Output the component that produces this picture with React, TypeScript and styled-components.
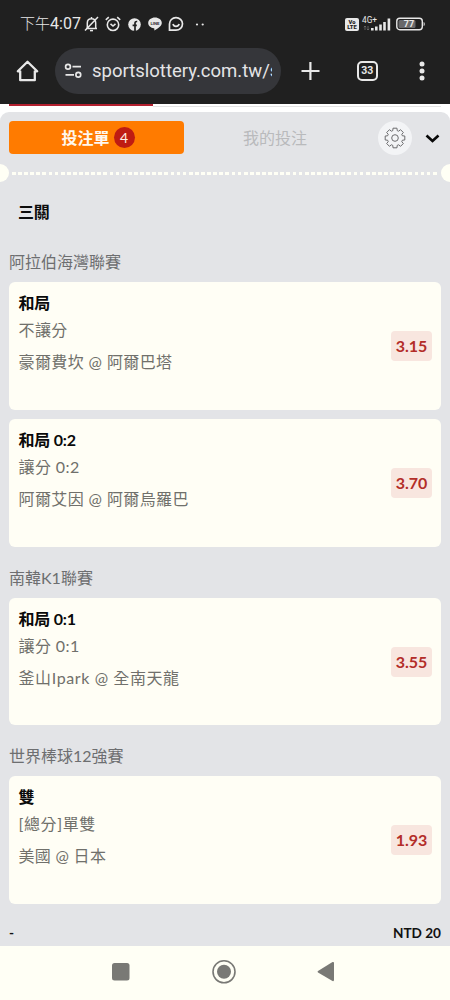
import React from "react";
import styled, { createGlobalStyle } from "styled-components";

const GlobalStyle = createGlobalStyle`
  * { box-sizing: border-box; }
  body { margin: 0; background: #fff; }
`;

const Screen = styled.div`
  width: 450px;
  height: 1000px;
  overflow: hidden;
  display: flex;
  flex-direction: column;
  background: #fff;
  font-family: Lato, "Noto Sans CJK TC", sans-serif;
`;

const StatusBar = styled.header`
  height: 48px;
  flex: none;
  display: flex;
  align-items: center;
  background: #202020;
  color: #e8e8e8;
  padding: 0 24px 0 20px;
`;

const Clock = styled.span`
  width: 64px;
  white-space: nowrap;
  font: 400 16px/24px Roboto, "Noto Sans CJK TC", sans-serif;
`;

const ClockPrefix = styled.span`
  font-size: 15px;
  font-weight: 300;
`;

const Notices = styled.div`
  display: flex;
  flex: 1;
  align-items: center;
`;

const Signals = styled.div`
  display: flex;
  align-items: center;
`;

const AddressBar = styled.div`
  height: 56px;
  flex: none;
  display: flex;
  align-items: center;
  background: #202020;
  padding: 0 18px 10px 16px;
`;

const UrlPill = styled.div`
  width: 226px;
  height: 46px;
  margin-left: 16px;
  margin-right: 20px;
  padding: 0 9px;
  border-radius: 23px;
  background: #35363a;
  color: #e4e4e6;
  display: flex;
  align-items: center;
  gap: 10px;
`;

const UrlText = styled.span`
  flex: 1;
  overflow: hidden;
  white-space: nowrap;
  font: 400 18.5px/26px Roboto, sans-serif;
`;

const TabCounter = styled.span`
  width: 20.5px;
  height: 20.5px;
  margin-left: 37px;
  border: 2px solid #e8e8e8;
  border-radius: 5px;
  color: #e8e8e8;
  font: 700 10.5px/16.5px Roboto, sans-serif;
  text-align: center;
`;

const PageStrip = styled.div`
  height: 8px;
  flex: none;
  background: linear-gradient(#e4e4e4, #e4e4e4) 153px 2px / 288px 1px no-repeat, #fff;
`;

const PageProgress = styled.div`
  width: 144px;
  height: 2px;
  margin-left: 9px;
  background: #b3202f;
`;

const Sheet = styled.main`
  flex: 1;
  min-height: 0;
  overflow: hidden;
  border-radius: 9px 9px 0 0;
  background: #e3e4e7;
  display: flex;
  flex-direction: column;
`;

const Tabs = styled.div`
  height: 51px;
  flex: none;
  display: flex;
  align-items: center;
  padding: 0 10px 0 9px;
`;

const Tab = styled.button<{ $active?: boolean }>`
  width: ${(p) => (p.$active ? 175 : 182)}px;
  height: 33px;
  padding: ${(p) => (p.$active ? "0 0 0 3px" : "0")};
  border: 0;
  border-radius: 4px;
  background: ${(p) => (p.$active ? "#ff7b00" : "transparent")};
  color: ${(p) => (p.$active ? "#fff8ee" : "#b9babc")};
  font: ${(p) => (p.$active ? 700 : 400)} 16px/24px Lato, "Noto Sans CJK TC", sans-serif;
  display: flex;
  align-items: center;
  justify-content: center;
  gap: 4px;
`;

const Count = styled.span`
  width: 21px;
  height: 21px;
  border-radius: 50%;
  background: #bf1c12;
  color: #fff0e4;
  font: 400 14px/21px Lato, sans-serif;
  text-align: center;
`;

const SettingsButton = styled.button`
  width: 34px;
  height: 34px;
  margin-left: 12px;
  margin-right: 13px;
  padding: 0;
  border: 0;
  border-radius: 50%;
  background: #f3f4f6;
  display: flex;
  align-items: center;
  justify-content: center;
`;

const Tear = styled.div`
  height: 19px;
  flex: none;
  display: flex;
  align-items: center;
  justify-content: space-between;
`;

const Notch = styled.i<{ $right?: boolean }>`
  width: 9px;
  height: 18px;
  background: #fffff5;
  border-radius: ${(p) => (p.$right ? "9px 0 0 9px" : "0 9px 9px 0")};
`;

const Perforation = styled.i`
  flex: 1;
  height: 3px;
  margin: 1px 2px 0 3px;
  background: repeating-linear-gradient(90deg, #fffff5 0 3.7px, transparent 3.7px 6.1px);
`;

const SlipTitle = styled.h2`
  margin: 18px 0 0 18px;
  font-size: 16px;
  line-height: 24px;
  font-weight: 700;
  letter-spacing: -0.3px;
  color: #0c0c0c;
`;

const League = styled.section<{ $first?: boolean }>`
  padding: 0 9px;
  margin-top: ${(p) => (p.$first ? 26.4 : 19)}px;
`;

const LeagueName = styled.h3`
  margin: 0 0 8px;
  font-size: 16px;
  line-height: 24px;
  font-weight: 400;
  color: #6d6e70;
`;

const Cards = styled.div`
  display: flex;
  flex-direction: column;
  gap: 9px;
`;

const Card = styled.article`
  height: 127.67px;
  border-radius: 6px;
  background: #fffef5;
  display: flex;
  align-items: center;
  justify-content: space-between;
  padding: 0 9px 0 9.5px;
`;

const Selection = styled.div`
  align-self: flex-start;
  padding-top: 9px;
`;

const Pick = styled.div`
  font-size: 16px;
  line-height: 24px;
  font-weight: 700;
  letter-spacing: -0.2px;
  color: #0a0a0a;
`;

const Detail = styled.div<{ $gap: number; $tracking?: number }>`
  margin-top: ${(p) => p.$gap}px;
  font-size: 16px;
  line-height: 24px;
  font-weight: 400;
  letter-spacing: ${(p) => p.$tracking ?? 0.4}px;
  color: #70706b;
`;

const Odds = styled.span`
  width: 41px;
  height: 30px;
  border-radius: 4px;
  background: #f8e6df;
  color: #b32d28;
  font-size: 16px;
  line-height: 30px;
  font-weight: 700;
  text-align: center;
`;

const Stake = styled.div`
  display: flex;
  justify-content: space-between;
  padding: 0 9px;
  margin-top: 17px;
  font-size: 13.6px;
  line-height: 24px;
  font-weight: 700;
  color: #111;
`;

const NavBar = styled.nav`
  height: 54px;
  flex: none;
  background: #fffff5;
  display: flex;
  justify-content: center;
  padding-top: 12px;
`;

const Glyph = styled.svg<{ $before?: number }>`
  display: block;
  flex: none;
  overflow: visible;
  margin-left: ${(p) => p.$before ?? 0}px;
`;

interface Bet {
  pick: string;
  market: string;
  teams: string;
  odds: string;
  marketTracking?: number;
  teamsTracking?: number;
}

const leagues: { name: string; bets: Bet[] }[] = [
  {
    name: "阿拉伯海灣聯賽",
    bets: [
      { pick: "和局", market: "不讓分", teams: "豪爾費坎 @ 阿爾巴塔", odds: "3.15" },
      { pick: "和局 0:2", market: "讓分 0:2", teams: "阿爾艾因 @ 阿爾烏羅巴", odds: "3.70" },
    ],
  },
  {
    name: "南韓K1聯賽",
    bets: [
      { pick: "和局 0:1", market: "讓分 0:1", teams: "釜山Ipark @ 全南天龍", odds: "3.55", teamsTracking: 0.6 },
    ],
  },
  {
    name: "世界棒球12強賽",
    bets: [
      { pick: "雙", market: "[總分]單雙", teams: "美國 @ 日本", odds: "1.93", marketTracking: 0.6, teamsTracking: 0.3 },
    ],
  },
];

const light = "#e8e8e8";

function gearPath() {
  const teeth = 8;
  const points: string[] = [];
  for (let i = 0; i < teeth; i++) {
    const base = (i * 2 * Math.PI) / teeth - Math.PI / 2;
    [[-0.2, 10], [0.2, 10], [0.29, 7.7], [0.495, 7.7]].forEach(([offset, r]) => {
      const a = base + offset;
      points.push(`${(11 + r * Math.cos(a)).toFixed(2)} ${(11 + r * Math.sin(a)).toFixed(2)}`);
    });
  }
  return `M${points.join("L")}Z`;
}

function NoticeIcons() {
  return (
    <Notices>
      <Glyph width="15" height="16" viewBox="0 0 15 16" fill="none" stroke={light} strokeWidth="1.5">
        <path d="M2 12.5h11M3.3 12V7c0-2.6 1.7-4.2 4.2-4.2S11.700 4.400 11.700 7v5M7.500 1v1.500M14 1 1 14.500" />
        <path d="M6 14.600h3" />
      </Glyph>
      <Glyph $before={6} width="16" height="16" viewBox="0 0 16 16" fill="none" stroke={light} strokeWidth="1.6">
        <circle cx="8" cy="8.800" r="5.700" />
        <path d="M.8 3.800 3.800 1.200M15.200 3.800l-3-2.600M5.500 7.800 8 10l2.500-2.200" />
      </Glyph>
      <Glyph $before={7} width="13" height="13" viewBox="0 0 13 13">
        <circle cx="6.500" cy="6.500" r="6.300" fill={light} />
        <path d="M7 13V5.200c0-1.300.6-1.800 2.200-1.700M4.600 7.300h4.200" stroke="#202020" strokeWidth="1.700" fill="none" />
      </Glyph>
      <Glyph $before={7} width="14" height="14" viewBox="0 0 14 14">
        <path d="M7 .6C3.300.6.2 2.900.2 6c0 2.700 2.500 4.800 5.700 5.300.6.1.5.6.4 2.100 2.300-1 7.500-4 7.500-7.400C13.800 2.900 10.700.6 7 .6Z" fill={light} />
        <text x="7" y="7.700" textAnchor="middle" fontFamily="Roboto, sans-serif" fontWeight="700" fontSize="4.300" fill="#303030">LINE</text>
      </Glyph>
      <Glyph $before={6} width="16" height="16" viewBox="0 0 16 16" fill="none" stroke={light} strokeWidth="1.700">
        <path d="M1.500 14.200V8A6.500 6.300 0 1 1 8 14.200Z" />
        <path d="M5 8c.8 3 5 3.200 6.200 0" />
      </Glyph>
      <Glyph $before={12} width="9" height="3" viewBox="0 0 9 3" fill={light}>
        <circle cx="1" cy="1.500" r="1.100" />
        <circle cx="6.700" cy="1.500" r="1.100" />
      </Glyph>
    </Notices>
  );
}

function SignalIcons() {
  return (
    <Signals>
      <Glyph width="14" height="13" viewBox="0 0 14 13">
        <rect width="14" height="13" rx="2" fill={light} />
        <g fill="#202020" fontFamily="Roboto, sans-serif" fontWeight="900" fontSize="5.800" textAnchor="middle">
          <text x="7" y="5.800">Vo</text>
          <text x="7" y="11.400">LTE</text>
        </g>
      </Glyph>
      <Glyph $before={3.5} width="29" height="16" viewBox="0 0 29 16" fill={light}>
        <text x="0" y="6.500" fontFamily="Roboto, sans-serif" fontSize="8.300">4G+</text>
        <path d="M3 10v4M1.800 11.200 3 10l1.200 1.200M6 10v4M4.800 12.800 6 14l1.200-1.200" fill="none" stroke="#777" strokeWidth=".7" />
        <path d="M9 12h2.600v2.500H9zM13 10.500h2.600v4H13zM17.200 8.500h2.600v6h-2.600zM21.200 6h2.600v8.500h-2.600zM25.600 2.500H28.200v12h-2.600z" />
      </Glyph>
      <Glyph $before={5} width="30" height="14" viewBox="0 0 30 14">
        <rect x=".8" y="1.300" width="25.500" height="11.400" rx="3" fill="none" stroke={light} strokeWidth="1.400" />
        <rect x="2.500" y="3" width="17" height="8" rx="1.500" fill="#68686a" />
        <path d="M27.600 5c1.500 0 1.500 4 0 4z" fill={light} />
        <text x="13" y="10.300" textAnchor="middle" fontFamily="Roboto, sans-serif" fontWeight="700" fontSize="9" fill={light}>77</text>
      </Glyph>
    </Signals>
  );
}

export default function App() {
  return (
    <Screen>
      <GlobalStyle />
      <StatusBar>
        <Clock><ClockPrefix>下午</ClockPrefix>4:07</Clock>
        <NoticeIcons />
        <SignalIcons />
      </StatusBar>
      <AddressBar>
        <Glyph width="23" height="22" viewBox="0 0 23 22" fill="none" stroke={light} strokeWidth="2.300" strokeLinejoin="round">
          <path d="M1.800 11.300 11.500 1.800l9.700 9.500h-2.400v8.900H4.200v-8.900Z" />
        </Glyph>
        <UrlPill>
          <Glyph width="18" height="16" viewBox="0 0 18 16" fill="none" stroke={light} strokeWidth="1.700">
            <circle cx="4" cy="3.700" r="2.400" />
            <circle cx="14.300" cy="11.800" r="2.400" />
            <path d="M8.500 3.700H17M1.500 11.800H10" />
          </Glyph>
          <UrlText>sportslottery.com.tw/s</UrlText>
        </UrlPill>
        <Glyph width="19" height="20" viewBox="0 0 19 20" stroke={light} strokeWidth="2.200">
          <path d="M9.400 1v18M.5 10h18" />
        </Glyph>
        <TabCounter>33</TabCounter>
        <Glyph $before={41.5} width="6" height="20" viewBox="0 0 6 20" fill={light}>
          <circle cx="3" cy="3" r="2.500" />
          <circle cx="3" cy="10" r="2.500" />
          <circle cx="3" cy="17" r="2.500" />
        </Glyph>
      </AddressBar>
      <PageStrip><PageProgress /></PageStrip>
      <Sheet>
        <Tabs>
          <Tab $active>投注單<Count>4</Count></Tab>
          <Tab>我的投注</Tab>
          <SettingsButton aria-label="設定">
            <Glyph width="22" height="22" viewBox="0 0 22 22" fill="none" stroke="#6c6c6e" strokeWidth="1" strokeLinejoin="round">
              <path d={gearPath()} />
              <circle cx="11" cy="11" r="3.300" />
            </Glyph>
          </SettingsButton>
          <Glyph width="15" height="10" viewBox="0 0 15 10" fill="none" stroke="#080808" strokeWidth="2.600">
            <path d="m1.500 2.500 6 5.500 6-5.500" />
          </Glyph>
        </Tabs>
        <Tear><Notch /><Perforation /><Notch $right /></Tear>
        <SlipTitle>三關</SlipTitle>
        {leagues.map((league, i) => (
          <League key={league.name} $first={i === 0}>
            <LeagueName>{league.name}</LeagueName>
            <Cards>
              {league.bets.map((bet) => (
                <Card key={bet.teams}>
                  <Selection>
                    <Pick>{bet.pick}</Pick>
                    <Detail $gap={3} $tracking={bet.marketTracking}>{bet.market}</Detail>
                    <Detail $gap={8} $tracking={bet.teamsTracking}>{bet.teams}</Detail>
                  </Selection>
                  <Odds>{bet.odds}</Odds>
                </Card>
              ))}
            </Cards>
          </League>
        ))}
        <Stake><span>-</span><span>NTD 20</span></Stake>
      </Sheet>
      <NavBar>
        <Glyph width="226" height="28" viewBox="0 0 226 28" fill="#797975">
          <rect x="0" y="5" width="17.500" height="17.500" rx="2.500" />
          <circle cx="112" cy="13.800" r="11" fill="none" stroke="#797975" strokeWidth="1.600" />
          <circle cx="112" cy="13.800" r="7" />
          <path d="M206 13 220.500 4Q222 3.500 222 5v17q0 1.500-1.500 1L206 14.500Q205 13.700 206 13Z" />
        </Glyph>
      </NavBar>
    </Screen>
  );
}
